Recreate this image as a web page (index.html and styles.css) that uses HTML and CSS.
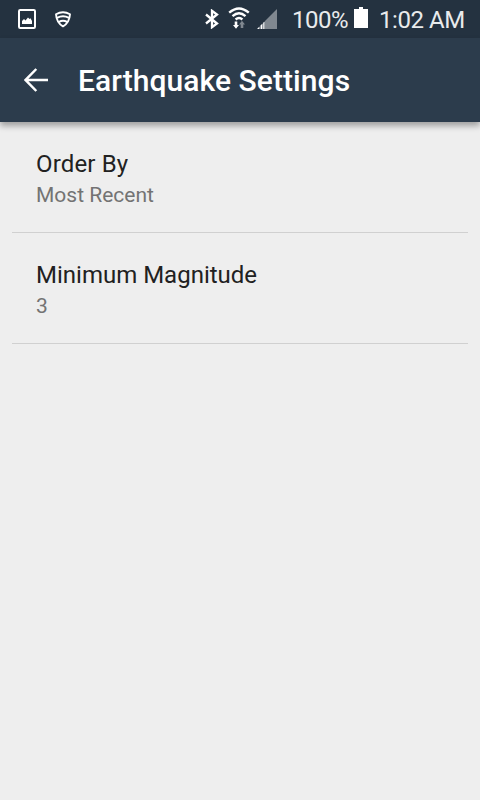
FILE: index.html
```html
<!DOCTYPE html>
<html lang="en">
<head>
<meta charset="utf-8">
<title>Earthquake Settings</title>
<link rel="stylesheet" href="styles.css">
</head>
<body>
<div class="status-bar">
  <svg class="icon-picture" width="18" height="20" viewBox="0 0 18 20"><rect x="1" y="1" width="16" height="18" rx="1.2" fill="none" stroke="#fff" stroke-width="2"/><path d="M4 15v-3l2-2 1.500 1.500L10 8.500l1.500 1.500 1-.7L14 12v3z" fill="#fff"/></svg>
  <svg class="icon-shield" width="16" height="17" viewBox="0 0 16 17"><path d="M1 3.200Q8-.8 15 3.200Q14.500 11.500 8 15.400Q1.500 11.500 1 3.200z" fill="none" stroke="#fff" stroke-width="1.900" stroke-linejoin="round"/><path d="M2 6.800Q8 3.800 14 6.800M4 10.900Q8 8.600 12 10.900" fill="none" stroke="#fff" stroke-width="2"/></svg>
  <div class="status-right">
    <svg class="icon-bluetooth" width="14" height="20" viewBox="0 0 14 20"><path d="M1 5.500l11 9L7 18.200V1.800l5 3.700-11 9" fill="none" stroke="#fff" stroke-width="2.300"/></svg>
    <svg class="icon-wifi" width="22" height="23" viewBox="0 0 22 23"><path d="M1.200 5.700Q11-2.800 20.800 5.700M4.500 9.200Q11 3.500 17.500 9.200M7.600 12.500Q11 9.400 14.400 12.500" fill="none" stroke="#fff" stroke-width="2.400"/><path d="M6.700 14.500h2.600V18H11l-3 3.800L5 18h1.700z" fill="#fff"/><path d="M12.700 21v-3.500H11l3-3.800 3 3.800h-1.700V21z" fill="#808890"/></svg>
    <svg class="icon-signal" width="20" height="20" viewBox="0 0 20 20"><path d="M8 12L20 0v20H8z" fill="#808890"/><path d="M0 20l2.500-2.500V20zM3.500 16.500L5.500 14.500V20h-2zM6.200 13.800L7.600 12.400V20H6.200z" fill="#fff"/></svg>
    <span class="percent">100%</span>
    <svg class="icon-battery" width="14" height="21" viewBox="0 0 14 21"><path d="M0 2h5V0h4v2h5v19H0z" fill="#fff"/></svg>
    <span class="clock">1:02 AM</span>
  </div>
</div>
<header class="app-bar">
  <svg class="icon-back" width="24" height="24" viewBox="0 0 24 24"><path d="M24 12H2M12.300 1L1.600 12l10.700 11" fill="none" stroke="#fff" stroke-width="2.500"/></svg>
  <h1 class="title">Earthquake Settings</h1>
</header>
<main class="settings">
  <section class="setting">
    <div class="name order">Order By</div>
    <div class="value">Most Recent</div>
  </section>
  <section class="setting">
    <div class="name">Minimum Magnitude</div>
    <div class="value">3</div>
  </section>
</main>
</body>
</html>
```
FILE: styles.css
```css
* {
  box-sizing: border-box;
}

body {
  margin: 0;
  height: 800px;
  overflow: hidden;
  background: #eeeeee;
  font-family: Roboto, "Liberation Sans", sans-serif;
}

.status-bar {
  display: flex;
  align-items: flex-start;
  height: 38px;
  padding-left: 18px;
  background: #243240;
  color: #fff;
}

svg {
  display: block;
  flex: none;
}

.icon-picture {
  margin-top: 9px;
}

.icon-shield {
  margin: 11px 0 0 19px;
}

.status-right {
  display: flex;
  align-items: flex-start;
  margin-left: 134px;
  font-size: 24px;
  line-height: 28px;
  letter-spacing: -0.45px;
  white-space: nowrap;
  color: #e9ebec;
}

.icon-bluetooth {
  margin-top: 9px;
}

.icon-wifi {
  margin: 7px 0 0 9px;
}

.icon-signal {
  margin: 9px 0 0 7px;
}

.percent {
  width: 62px;
  margin: 6px 0 0 15px;
}

.icon-battery {
  margin-top: 7px;
}

.clock {
  margin: 6px 0 0 11px;
}

.app-bar {
  position: relative;
  display: flex;
  align-items: center;
  height: 84px;
  padding-left: 24px;
  background: #2c3c4c;
  color: #fff;
  box-shadow: 0 4px 6px rgba(0, 0, 0, 0.32);
}

.title {
  margin: 1px 0 0 30px;
  font-size: 30px;
  font-weight: 500;
  line-height: 36px;
  letter-spacing: 0.07px;
}

.settings {
  padding: 0 12px;
}

.setting {
  height: 111px;
  padding: 28px 24px 0;
  border-bottom: 1px solid #d0d0d0;
}

.name {
  font-size: 24px;
  line-height: 28px;
  color: #212121;
}

.order {
  letter-spacing: 0.15px;
}

.value {
  margin-top: 5px;
  font-size: 21px;
  line-height: 25px;
  color: #737373;
}
```
